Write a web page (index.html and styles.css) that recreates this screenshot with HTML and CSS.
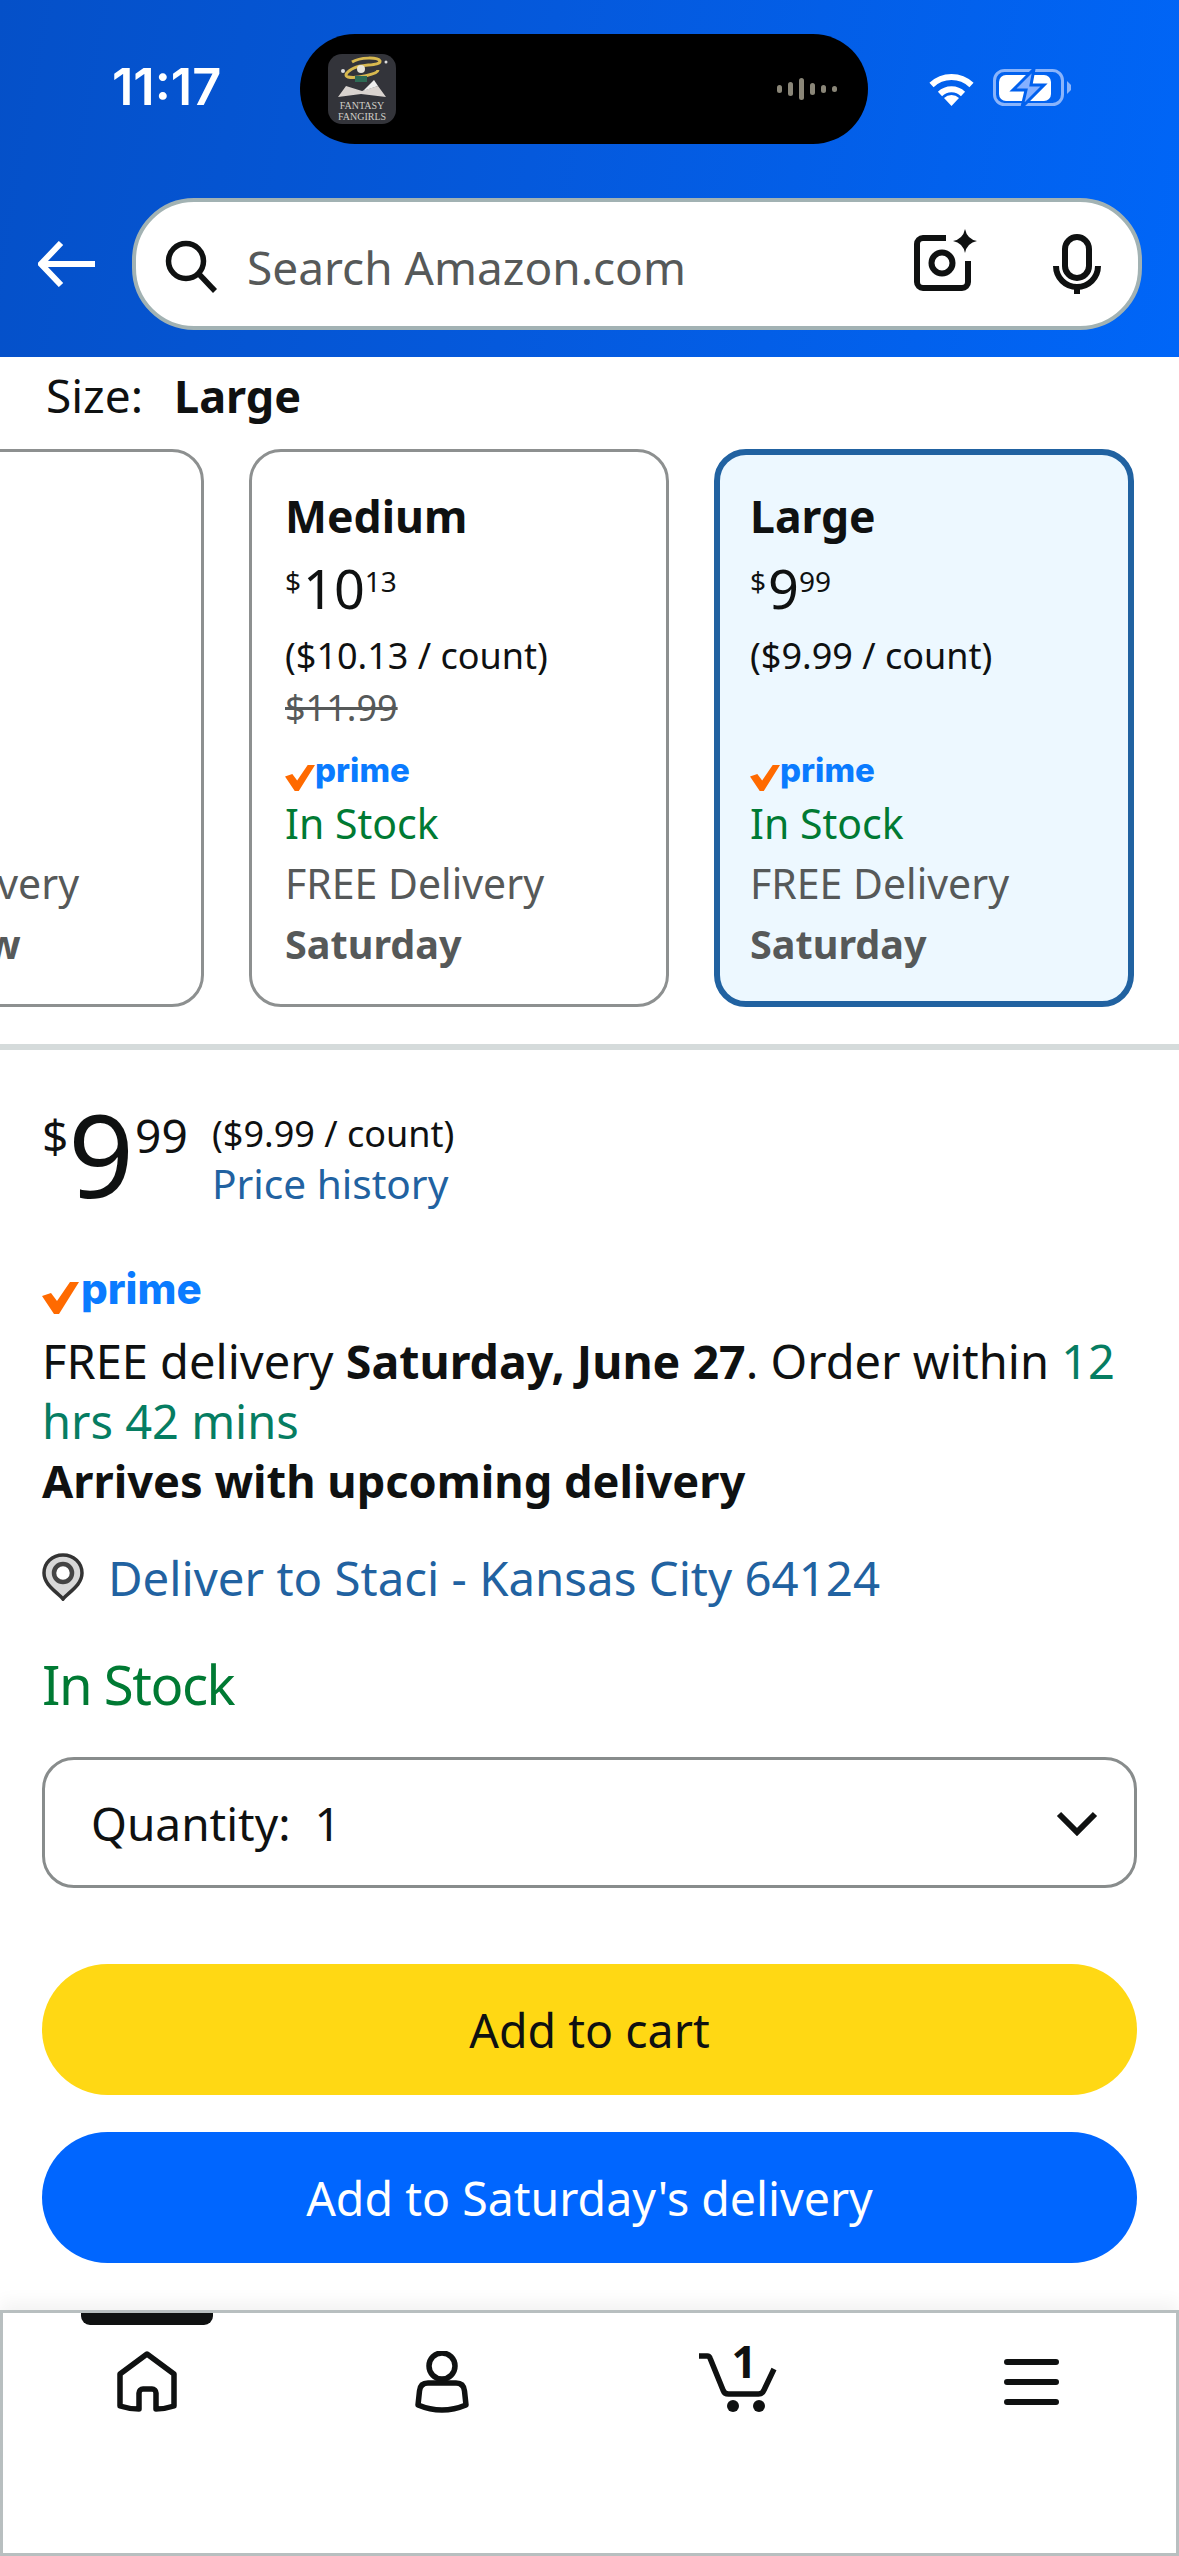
FILE: index.html
```html
<!DOCTYPE html>
<html>

<head>
    <meta charset="UTF-8" />
    <meta name="viewport" content="width=device-width, initial-scale=1.0">
    <title>Amazon.com - Size: Large</title>
    <link rel="stylesheet" href="styles.css">
</head>

<body>
    <header class="top">
        <div class="status">
            <div class="time">11:17</div>
            <div class="island">
                <div class="app-icon">
                    <svg class="app-art" viewBox="0 0 68 46" width="68" height="46">
                        <path d="M24 8 C32 3 50 3 52 7 C53 12 34 10 26 14 C18 18 16 22 20 23 C28 25 50 20 50 16" fill="none" stroke="#d8b94f" stroke-width="3" />
                        <circle cx="33" cy="15" r="4" fill="#e8e4d8" />
                        <path d="M27 22 h12 v6 h-12 z" fill="#2d6b55" />
                        <circle cx="15" cy="17" r="2" fill="#ddd" />
                        <circle cx="58" cy="8" r="1.5" fill="#ddd" />
                        <path d="M10 43 L33 40 L58 43 L50 32 L34 37 L18 32 Z" fill="#d9d3cf" />
                        <path d="M35 37 L46 26 L50 32 Z" fill="#eee" />
                    </svg>
                    <div class="app-name">FANTASY<br />FANGIRLS</div>
                </div>
                <svg class="wave" viewBox="0 0 60 22" width="60" height="22">
                    <rect x="0" y="7" width="5" height="8" rx="2.5" />
                    <rect x="11" y="4" width="5" height="14" rx="2.5" />
                    <rect x="22" y="0" width="5" height="22" rx="2.5" />
                    <rect x="33" y="5" width="5" height="12" rx="2.5" />
                    <rect x="44" y="7" width="5" height="8" rx="2.5" />
                    <rect x="55" y="8" width="5" height="6" rx="2.5" />
                </svg>
            </div>
            <div class="status-icons">
                <svg viewBox="0 0 47 35" width="47" height="35">
                    <path d="M3.5 14 A29 29 0 0 1 43.5 14" fill="none" stroke="#fff" stroke-width="6" />
                    <path d="M12 23 A16.5 16.5 0 0 1 35 23" fill="none" stroke="#fff" stroke-width="6" />
                    <path d="M23.5 35 L16 27 A11 11 0 0 1 31 27 Z" fill="#fff" />
                </svg>
                <svg viewBox="0 0 80 40" width="80" height="40">
                    <rect x="1.5" y="2.5" width="68" height="34" rx="10" fill="none" stroke="#8ab4fb" stroke-width="3" />
                    <path d="M74 13 L78 17 V22 L74 26 Z" fill="#8ab4fb" />
                    <rect x="6" y="7" width="52" height="26" rx="7" fill="#fff" />
                    <path d="M41 1 L20 22 H33 L29 39 L51 17 H38 Z" fill="#85b0ff" stroke="#0060ee" stroke-width="3" />
                </svg>
            </div>
        </div>
        <div class="search-row">
            <svg class="back" viewBox="0 0 57 46" width="57" height="46">
                <path d="M23 2 L3 23 L23 44 M3 23 H57" fill="none" stroke="#fff" stroke-width="6" />
            </svg>
            <div class="search">
                <svg class="search-icon" viewBox="0 0 54 54" width="54" height="54">
                    <circle cx="21" cy="21" r="17.5" fill="none" stroke="#0f1111" stroke-width="5.5" />
                    <path d="M33 33 L50 51" stroke="#0f1111" stroke-width="5.5" />
                </svg>
                <span class="search-text">Search Amazon.com</span>
                <svg class="camera" viewBox="0 0 64 64" width="64" height="64">
                    <path d="M32 9 H9 a6 6 0 0 0-6 6 V53 a6 6 0 0 0 6 6 H48 a6 6 0 0 0 6-6 V32" fill="none" stroke="#0f1111" stroke-width="6" />
                    <circle cx="28" cy="34" r="10.5" fill="none" stroke="#0f1111" stroke-width="6" />
                    <path d="M51 0 Q53 10 63 12 Q53 14 51 24 Q49 14 39 12 Q49 10 51 0 Z" fill="#0f1111" />
                </svg>
                <svg class="mic" viewBox="0 0 48 60" width="48" height="60">
                    <rect x="12" y="3" width="24" height="41" rx="12" fill="none" stroke="#0f1111" stroke-width="6" />
                    <path d="M3 32 a21 21 0 0 0 42 0 M24 53 V60" fill="none" stroke="#0f1111" stroke-width="6" />
                </svg>
            </div>
        </div>
    </header>

    <div class="size-label">Size: <b>Large</b></div>

    <div class="cards-clip">
        <div class="cards">
            <div class="card">
                <div class="card-name"></div>
                <div class="card-price"></div>
                <div class="card-count"></div>
                <div class="card-old"></div>
                <div class="card-prime"></div>
                <div class="card-stock"></div>
                <div class="card-line">FREE Delivery</div>
                <div class="card-line"><b>Tomorrow</b></div>
            </div>
            <div class="card">
                <div class="card-name">Medium</div>
                <div class="card-price"><sup>$</sup>10<sup>13</sup></div>
                <div class="card-count">($10.13 / count)</div>
                <div class="card-old"><s>$11.99</s></div>
                <div class="card-prime">
                    <span class="prime small">
                        <svg viewBox="0 0 37 34"><path d="M0 15 L9 12 L15 20 L28 1 L37 1 L17 33 L12 33 Z" /></svg>
                        <span>prime</span>
                    </span>
                </div>
                <div class="card-stock">In Stock</div>
                <div class="card-line">FREE Delivery</div>
                <div class="card-line"><b>Saturday</b></div>
            </div>
            <div class="card selected">
                <div class="card-name">Large</div>
                <div class="card-price"><sup>$</sup>9<sup>99</sup></div>
                <div class="card-count">($9.99 / count)</div>
                <div class="card-old"></div>
                <div class="card-prime">
                    <span class="prime small">
                        <svg viewBox="0 0 37 34"><path d="M0 15 L9 12 L15 20 L28 1 L37 1 L17 33 L12 33 Z" /></svg>
                        <span>prime</span>
                    </span>
                </div>
                <div class="card-stock">In Stock</div>
                <div class="card-line">FREE Delivery</div>
                <div class="card-line"><b>Saturday</b></div>
            </div>
        </div>
    </div>

    <div class="divider"></div>

    <main class="buybox">
        <div class="price-row">
            <div class="price"><sup>$</sup><span class="price-whole">9</span><sup class="price-cents">99</sup></div>
            <div class="price-side">
                <div class="price-count">($9.99 / count)</div>
                <a class="link">Price history</a>
            </div>
        </div>

        <div class="prime large">
            <svg viewBox="0 0 37 34"><path d="M0 15 L9 12 L15 20 L28 1 L37 1 L17 33 L12 33 Z" /></svg>
            <span>prime</span>
        </div>

        <div class="delivery">
            <div>FREE delivery <b>Saturday, June 27</b>. Order within <span class="countdown">12</span></div>
            <div class="countdown">hrs 42 mins</div>
            <div class="arrives">Arrives with upcoming delivery</div>
        </div>

        <div class="deliver-to">
            <svg viewBox="0 0 42 48" width="42" height="48">
                <path d="M21 2 C32 2 40 10 40 20 C40 32 27 39 21 46 C15 39 2 32 2 20 C2 10 10 2 21 2 Z" fill="#d8d8d8" stroke="#333" stroke-width="3.5" />
                <circle cx="21" cy="20" r="9" fill="#fff" stroke="#444" stroke-width="4.5" />
            </svg>
            <a class="link">Deliver to Staci - Kansas City 64124</a>
        </div>

        <div class="stock">In Stock</div>

        <div class="quantity">
            <span>Quantity:&nbsp; 1</span>
            <svg viewBox="0 0 42 26" width="42" height="26">
                <path d="M3 4 L21 22 L39 4" fill="none" stroke="#0f1111" stroke-width="6" />
            </svg>
        </div>

        <div class="btn btn-cart">Add to cart</div>
        <div class="btn btn-blue">Add to Saturday's delivery</div>
    </main>

    <nav class="tabs">
        <div class="tab active">
            <svg viewBox="0 0 60 62" width="60" height="62">
                <path d="M39 58 V42 a4 4 0 0 0-4-4 H26 a4 4 0 0 0-4 4 V58 Q12 58 3 55 V23 L30 3 L57 23 V55 Q48 58 39 58 Z" fill="none" stroke="#0f1111" stroke-width="5.5" stroke-linejoin="round" />
            </svg>
        </div>
        <div class="tab">
            <svg viewBox="0 0 54 62" width="54" height="62">
                <circle cx="27" cy="15" r="13" fill="none" stroke="#0f1111" stroke-width="5.5" />
                <path d="M13 32 H41 C46 32 49 35 49.5 40 L51 54 Q27 64 3 54 L4.5 40 C5 35 8 32 13 32 Z" fill="none" stroke="#0f1111" stroke-width="5.5" stroke-linejoin="round" />
            </svg>
        </div>
        <div class="tab tab-cart">
            <svg viewBox="0 0 78 68" width="78" height="68">
                <path d="M1 9 H9 a3 3 0 0 1 3 2 L25 43 a6 6 0 0 0 6 4 H60 a6 6 0 0 0 6-4 L76 22" fill="none" stroke="#0f1111" stroke-width="5.5" />
                <circle cx="35" cy="59" r="6" fill="#0f1111" />
                <circle cx="61" cy="59" r="6" fill="#0f1111" />
                <text class="cart-count" x="46" y="31" text-anchor="middle">1</text>
            </svg>
        </div>
        <div class="tab tab-menu">
            <svg viewBox="0 0 55 46" width="55" height="46">
                <path d="M3 3 H52 M3 23 H52 M3 43 H52" fill="none" stroke="#0f1111" stroke-width="6" stroke-linecap="round" />
            </svg>
        </div>
    </nav>
</body>

</html>
```

FILE: styles.css
```css
* {
    box-sizing: border-box;
}

html,
body {
    margin: 0;
    padding: 0;
}

body {
    width: 1179px;
    height: 2556px;
    overflow: hidden;
    background-color: #fff;
    color: #0f1111;
    font-family: "Noto Sans", "Open Sans", sans-serif;
    display: flex;
    flex-direction: column;
}

/* header */
.top {
    height: 357px;
    flex: none;
    background: linear-gradient(100deg, #0550c8 0%, #0559dc 45%, #0066f8 100%);
}

.status {
    display: flex;
    padding-top: 34px;
}

.time {
    width: 300px;
    height: 110px;
    padding-left: 112px;
    color: #fff;
    font-family: Inter, sans-serif;
    font-size: 50.5px;
    font-weight: 600;
    line-height: 106px;
}

.island {
    width: 568px;
    height: 110px;
    background-color: #000;
    border-radius: 55px;
    display: flex;
    align-items: center;
    justify-content: space-between;
    padding: 0 31px 0 28px;
}

.app-icon {
    width: 68px;
    height: 70px;
    background-color: #33343a;
    border-radius: 14px;
    overflow: hidden;
    text-align: center;
}

.app-art {
    display: block;
}

.app-name {
    font-family: "Liberation Serif", serif;
    font-size: 10px;
    line-height: 11px;
    color: #d0cfc8;
    white-space: nowrap;
}

.wave {
    fill: #8a8678;
}

.status-icons {
    display: flex;
    align-items: center;
    gap: 18px;
    margin-left: 60px;
    height: 110px;
    padding-bottom: 2px;
}

.search-row {
    display: flex;
    align-items: center;
    margin-top: 54px;
    padding-left: 38px;
}

.back {
    margin-right: 37px;
    flex: none;
}

.search {
    width: 1010px;
    height: 132px;
    background-color: #fff;
    border: 4px solid #a2b2b3;
    border-radius: 62px;
    display: flex;
    align-items: center;
    padding-left: 29px;
}

.search-icon {
    margin-top: 6px;
}

.search-text {
    font-size: 46px;
    color: #565959;
    margin-left: 28px;
    margin-top: 6px;
    flex: 1;
}

.camera {
    margin-right: 75px;
    margin-top: -6px;
}

.mic {
    margin-right: 37px;
}

/* size cards */
.size-label {
    height: 92px;
    flex: none;
    padding: 13px 0 0 46px;
    font-size: 46px;
    line-height: 50px;
}

.size-label b {
    margin-left: 19px;
    font-size: 45px;
}

.cards-clip {
    overflow: hidden;
    flex: none;
}

.cards {
    display: flex;
    gap: 45px;
    margin-left: -216px;
    width: 1400px;
}

.card {
    width: 420px;
    height: 558px;
    flex: none;
    border: 3px solid #8d9090;
    border-radius: 32px;
    padding: 34px 0 0 33px;
}

.card.selected {
    background-color: #edf8ff;
    border: 6px solid #2162a1;
    padding: 31px 0 0 30px;
}

.card-name {
    height: 60px;
    font-size: 44.5px;
    font-weight: 700;
    line-height: 60px;
}

.card-price {
    height: 64px;
    font-size: 54px;
    line-height: 84px;
}

.card-price sup {
    font-size: 28px;
    line-height: 0;
    vertical-align: 17px;
    margin-right: 2px;
}

.card-count {
    height: 52px;
    margin-top: 20px;
    font-size: 36px;
    line-height: 52px;
}

.card-old {
    height: 52px;
    font-size: 36px;
    line-height: 52px;
    color: #565959;
}

.card-prime {
    height: 59px;
    display: flex;
    align-items: center;
    padding-top: 16px;
}

.card-stock {
    height: 60px;
    font-size: 41px;
    line-height: 60px;
    color: #007a33;
}

.card-line {
    height: 60px;
    font-size: 41px;
    line-height: 60px;
    color: #565959;
    white-space: nowrap;
}

.card-line b {
    font-size: 39.6px;
}

/* prime logo */
.prime {
    display: inline-flex;
    align-items: flex-start;
    color: #0a7bff;
    font-family: Inter, sans-serif;
    font-weight: 800;
}

.prime svg {
    fill: #ff6a00;
    flex: none;
}

.prime.small {
    font-size: 33px;
    line-height: 36px;
}

.prime.small svg {
    width: 30px;
    height: 28px;
    margin-top: 12px;
}

.prime.large {
    display: flex;
    height: 50px;
    margin-top: 1px;
    font-size: 42px;
    line-height: 48px;
}

.prime.large svg {
    width: 37px;
    height: 34px;
    margin: 16px 2px 0 0;
}

.divider {
    height: 6px;
    flex: none;
    margin-top: 37px;
    background-color: #d5dbdb;
}

/* buy box */
.buybox {
    flex: 1;
    padding: 0 42px;
}

.price-row {
    display: flex;
    height: 214px;
    padding-top: 54px;
}

.price {
    width: 170px;
    height: 100px;
    font-size: 115px;
    line-height: 100px;
    white-space: nowrap;
}

.price sup {
    font-size: 46px;
    line-height: 0;
    vertical-align: 45px;
}

.price sup.price-cents {
    margin-left: 1px;
}

.price-side {
    font-size: 36px;
    line-height: 50px;
    margin-top: 5px;
}

.price-count {
    height: 50px;
}

.link {
    color: #2162a1;
    font-size: 40.6px;
}

.delivery {
    margin-top: 16px;
    font-size: 47px;
    line-height: 60px;
    white-space: nowrap;
}

.delivery b {
    font-size: 46.5px;
}

.arrives {
    font-size: 45.2px;
    font-weight: 700;
}

.countdown {
    color: #067d62;
}

.deliver-to {
    display: flex;
    align-items: center;
    gap: 24px;
    margin-top: 36px;
    height: 60px;
}

.deliver-to .link {
    font-size: 47.4px;
}

.stock {
    margin-top: 44px;
    font-size: 54.5px;
    line-height: 66px;
    letter-spacing: -1.5px;
    color: #007a33;
}

.quantity {
    height: 131px;
    margin-top: 40px;
    border: 3px solid #888c8c;
    border-radius: 32px;
    display: flex;
    align-items: center;
    justify-content: space-between;
    padding: 0 36px 0 46px;
    font-size: 46px;
}

.btn {
    height: 131px;
    border-radius: 66px;
    display: flex;
    align-items: center;
    justify-content: center;
    font-size: 46.5px;
}

.btn-cart {
    margin-top: 76px;
    background-color: #ffd814;
}

.btn-blue {
    margin-top: 37px;
    background-color: #0066ff;
    color: #fff;
}

/* tab bar */
.tabs {
    height: 246px;
    flex: none;
    box-shadow: inset 0 0 0 3px #b8bfc0, 0 -8px 16px rgba(0, 0, 0, .05);
    display: grid;
    grid-template-columns: repeat(4, 1fr);
    align-items: start;
    background-color: #fff;
}

.tab {
    position: relative;
    display: flex;
    justify-content: center;
    padding-top: 41px;
}

.tab-cart {
    padding-top: 37px;
}

.tab-cart svg {
    overflow: visible;
}

.tab-menu {
    padding-top: 49px;
}

.tab.active::before {
    content: "";
    position: absolute;
    top: 3px;
    left: 81px;
    width: 132px;
    height: 12px;
    background-color: #0f1111;
    border-radius: 0 0 9px 9px;
}

.cart-count {
    font-family: "Noto Sans", sans-serif;
    font-size: 44px;
    font-weight: 700;
    fill: #0f1111;
}
```
